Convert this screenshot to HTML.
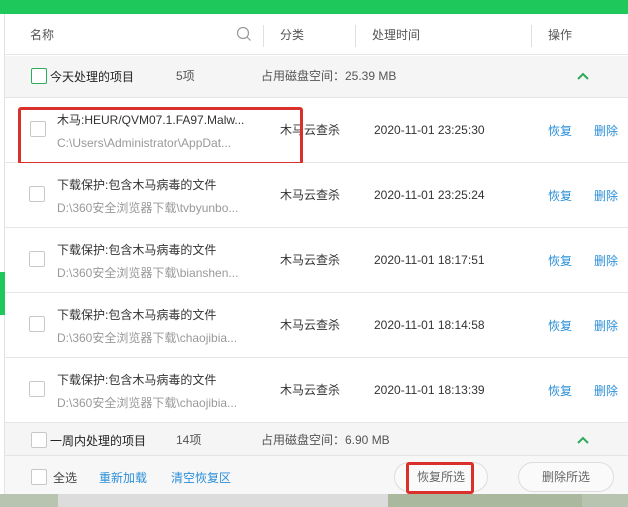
<!DOCTYPE html>
<html><head><meta charset="utf-8"><style>
*{margin:0;padding:0;box-sizing:border-box}
body{width:628px;height:507px;overflow:hidden;background:#fff;font-family:"Liberation Sans","Noto Sans CJK SC",sans-serif;font-size:12px;line-height:14px;color:#333;position:relative}
.abs{position:absolute}
.top{left:0;top:0;width:628px;height:14px;background:#1fc85a}
.left{left:0;top:14px;width:5px;height:480px;background:#fff;border-right:1px solid #e2e2e2}
.hdr{left:5px;top:14px;width:623px;height:41px;background:#fff;border-bottom:1px solid #e6e6e6;color:#555}
.grp{left:5px;width:623px;background:#f5f5f5;border-bottom:1px solid #e4e4e4}
.row{left:5px;width:623px;height:65px;border-bottom:1px solid #e6e6e6;background:#fff}
.cb{position:absolute;width:16px;height:16px;border:1px solid #c8c8c8;background:#fff;border-radius:2px}
.t1{position:absolute;left:52px;top:15px;color:#333;white-space:nowrap}
.t2{position:absolute;left:52px;top:38px;color:#999;white-space:nowrap}
.cat{position:absolute;left:275px;top:25px}
.tm{position:absolute;left:369px;top:25px}
.a1{position:absolute;left:543px;top:26px;color:#2b8fd8}
.a2{position:absolute;left:589px;top:26px;color:#2b8fd8}
.sep{position:absolute;top:11px;width:1px;height:22px;background:#e0e0e0}
.btn{position:absolute;height:30px;border:1px solid #ddd;border-radius:15px;background:#fafafa;color:#666;text-align:center;line-height:28px}
</style></head><body>
<div class="abs top"></div>
<div class="abs left"></div>
<div class="abs" style="left:0;top:272px;width:5px;height:43px;background:#1fc85a"></div>
<div class="abs hdr">
 <span class="abs" style="left:25px;top:14px">名称</span>
 <svg class="abs" style="left:231px;top:12px" width="16" height="16"><circle cx="7" cy="7" r="5.5" fill="none" stroke="#999" stroke-width="1.2"/><line x1="11" y1="11" x2="14.5" y2="14.5" stroke="#999" stroke-width="1.2"/></svg>
 <div class="sep" style="left:258px"></div>
 <span class="abs" style="left:275px;top:14px">分类</span>
 <div class="sep" style="left:350px"></div>
 <span class="abs" style="left:367px;top:14px">处理时间</span>
 <div class="sep" style="left:526px"></div>
 <span class="abs" style="left:543px;top:14px">操作</span>
</div>
<div class="abs grp" style="top:56px;height:42px">
 <div class="cb" style="left:26px;top:12px;border-color:#2eaa5c"></div>
 <span class="abs" style="left:45px;top:14px;color:#222">今天处理的项目</span>
 <span class="abs" style="left:171px;top:13px;color:#555">5项</span>
 <span class="abs" style="left:256px;top:13px;color:#555">占用磁盘空间：25.39 MB</span>
 <svg class="abs" style="left:571px;top:15px" width="14" height="10"><path d="M2 8 L7 3 L12 8" fill="none" stroke="#2eaa5c" stroke-width="2"/></svg>
</div>
<div class="abs row" style="top:98px">
 <div class="cb" style="left:25px;top:23px"></div>
 <div class="t1">木马:HEUR/QVM07.1.FA97.Malw...</div>
 <div class="t2">C:\Users\Administrator\AppDat...</div>
 <div class="cat">木马云查杀</div><div class="tm">2020-11-01 23:25:30</div>
 <div class="a1">恢复</div><div class="a2">删除</div>
</div>
<div class="abs" style="left:18px;top:107px;width:285px;height:58px;border:3px solid #d9302b;border-radius:3px"></div>
<div class="abs row" style="top:163px">
 <div class="cb" style="left:24px;top:23px"></div>
 <div class="t1">下载保护:包含木马病毒的文件</div>
 <div class="t2">D:\360安全浏览器下载\tvbyunbo...</div>
 <div class="cat">木马云查杀</div><div class="tm">2020-11-01 23:25:24</div>
 <div class="a1">恢复</div><div class="a2">删除</div>
</div>
<div class="abs row" style="top:228px">
 <div class="cb" style="left:24px;top:23px"></div>
 <div class="t1">下载保护:包含木马病毒的文件</div>
 <div class="t2">D:\360安全浏览器下载\bianshen...</div>
 <div class="cat">木马云查杀</div><div class="tm">2020-11-01 18:17:51</div>
 <div class="a1">恢复</div><div class="a2">删除</div>
</div>
<div class="abs row" style="top:293px">
 <div class="cb" style="left:24px;top:23px"></div>
 <div class="t1">下载保护:包含木马病毒的文件</div>
 <div class="t2">D:\360安全浏览器下载\chaojibia...</div>
 <div class="cat">木马云查杀</div><div class="tm">2020-11-01 18:14:58</div>
 <div class="a1">恢复</div><div class="a2">删除</div>
</div>
<div class="abs row" style="top:358px">
 <div class="cb" style="left:24px;top:23px"></div>
 <div class="t1">下载保护:包含木马病毒的文件</div>
 <div class="t2">D:\360安全浏览器下载\chaojibia...</div>
 <div class="cat">木马云查杀</div><div class="tm">2020-11-01 18:13:39</div>
 <div class="a1">恢复</div><div class="a2">删除</div>
</div>
<div class="abs grp" style="top:423px;height:33px">
 <div class="cb" style="left:26px;top:9px"></div>
 <span class="abs" style="left:45px;top:11px;color:#222">一周内处理的项目</span>
 <span class="abs" style="left:171px;top:10px;color:#555">14项</span>
 <span class="abs" style="left:256px;top:10px;color:#555">占用磁盘空间：6.90 MB</span>
 <svg class="abs" style="left:571px;top:12px" width="14" height="10"><path d="M2 8 L7 3 L12 8" fill="none" stroke="#2eaa5c" stroke-width="2"/></svg>
</div>
<div class="abs" style="left:5px;top:456px;width:623px;height:38px;background:#f7f7f7">
 <div class="cb" style="left:26px;top:13px"></div>
 <span class="abs" style="left:48px;top:15px;color:#444">全选</span>
 <span class="abs" style="left:94px;top:15px;color:#2b8fd8">重新加载</span>
 <span class="abs" style="left:166px;top:15px;color:#2b8fd8">清空恢复区</span>
 <div class="btn" style="left:389px;top:6px;width:94px">恢复所选</div>
 <div class="btn" style="left:513px;top:6px;width:96px">删除所选</div>
</div>
<div class="abs" style="left:406px;top:462px;width:68px;height:32px;border:3px solid #d9302b;border-radius:3px"></div>
<div class="abs" style="left:0;top:494px;width:628px;height:13px;background:#b8c4b0"></div>
<div class="abs" style="left:58px;top:494px;width:330px;height:13px;background:#dcdcdc"></div>
<div class="abs" style="left:388px;top:494px;width:194px;height:13px;background:#aab89e"></div>
</body></html>
